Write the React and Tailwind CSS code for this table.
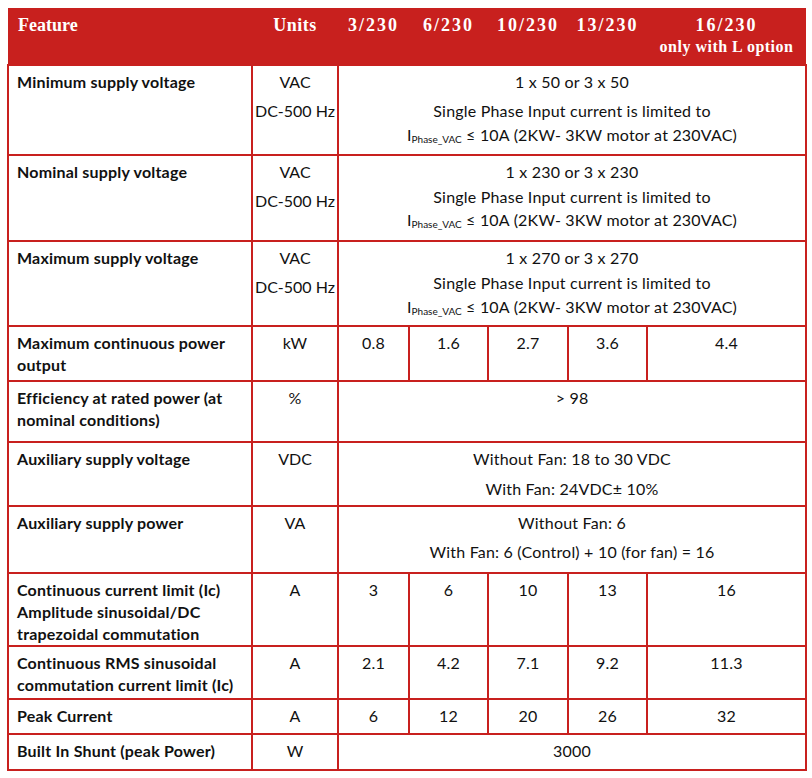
const RED = "border-[#c8201e]";

const sub = (
  <>
    I<span className="text-[10px] align-[-2px] tracking-normal">Phase_VAC</span> ≤ 10A (2KW- 3KW motor at 230VAC)
  </>
);

const rows = [
  {
    label: ["Minimum supply voltage"],
    units: ["VAC", "DC-500 Hz"],
    merged: ["1 x 50 or 3 x 50", "Single Phase Input current is limited to", sub],
    gaps: ["mt-[7px]", "mt-[2px]"],
    h: "h-[90px]",
  },
  {
    label: ["Nominal supply voltage"],
    units: ["VAC", "DC-500 Hz"],
    merged: ["1 x 230 or 3 x 230", "Single Phase Input current is limited to", sub],
    gaps: ["mt-[3px]", "mt-[1px]"],
    h: "h-[86px]",
  },
  {
    label: ["Maximum supply voltage"],
    units: ["VAC", "DC-500 Hz"],
    merged: ["1 x 270 or 3 x 270", "Single Phase Input current is limited to", sub],
    gaps: ["mt-[3px]", "mt-[2px]"],
    h: "h-[85px]",
  },
  {
    label: ["Maximum continuous power", "output"],
    units: ["kW"],
    values: ["0.8", "1.6", "2.7", "3.6", "4.4"],
    h: "h-[55px]",
  },
  {
    label: ["Efficiency at rated power (at", "nominal conditions)"],
    units: ["%"],
    merged: ["> 98"],
    h: "h-[61px]",
  },
  {
    label: ["Auxiliary supply voltage"],
    units: ["VDC"],
    merged: ["Without Fan: 18 to 30 VDC", "With Fan: 24VDC± 10%"],
    gaps: ["mt-[8px]"],
    h: "h-[64px]",
  },
  {
    label: ["Auxiliary supply power"],
    units: ["VA"],
    merged: ["Without Fan: 6", "With Fan: 6 (Control) + 10 (for fan) = 16"],
    gaps: ["mt-[7px]"],
    h: "h-[67px]",
  },
  {
    label: ["Continuous current limit (Ic)", "Amplitude sinusoidal/DC", "trapezoidal commutation"],
    units: ["A"],
    values: ["3", "6", "10", "13", "16"],
    h: "h-[73px]",
  },
  {
    label: ["Continuous RMS sinusoidal", "commutation current limit (Ic)"],
    units: ["A"],
    values: ["2.1", "4.2", "7.1", "9.2", "11.3"],
    h: "h-[53px]",
  },
  {
    label: ["Peak Current"],
    units: ["A"],
    values: ["6", "12", "20", "26", "32"],
    h: "h-[35px]",
  },
  {
    label: ["Built In Shunt (peak Power)"],
    units: ["W"],
    merged: ["3000"],
    h: "h-[36px]",
  },
];

export default function App() {
  const cell = `border-2 ${RED} align-top pt-[5px] pb-0`;
  const head = "align-top text-center pt-[6px] font-bold tracking-[2px]";

  return (
    <div className="min-h-screen bg-white pt-[8px] pl-[7px] font-['Lato','Open_Sans',sans-serif] text-[16px] leading-[22px] tracking-[0.2px] text-[#111]">
      <table className="table-fixed border-collapse w-[798px]">
        <colgroup>
          <col className="w-[244px]" />
          <col className="w-[86px]" />
          <col className="w-[71px]" />
          <col className="w-[79px]" />
          <col className="w-[80px]" />
          <col className="w-[79px]" />
          <col className="w-[159px]" />
        </colgroup>

        {/* HEADER */}
        <thead>
          <tr className="h-[57px] bg-[#c8201e] text-white font-['Liberation_Serif',serif] font-bold text-[18px] leading-[22px] tracking-normal">
            <th className="align-top text-left pl-[10px] pt-[6px] font-bold">Feature</th>
            <th className="align-top text-center pt-[6px] font-bold tracking-[0.5px]">Units</th>
            <th className={head}>3/230</th>
            <th className={head}>6/230</th>
            <th className={head}>10/230</th>
            <th className={head}>13/230</th>
            <th className={head}>
              16/230
              <div className="text-[16px] leading-[22px] tracking-[0.5px] whitespace-nowrap">only with L option</div>
            </th>
          </tr>
        </thead>

        {/* BODY */}
        <tbody>
          {rows.map((row, i) => (
            <tr key={i} className={row.h}>
              <td className={`${cell} pl-[8px] font-bold`}>
                {row.label.map((l, j) => (
                  <div key={j} className="whitespace-nowrap">{l}</div>
                ))}
              </td>

              <td className={`${cell} text-center tracking-normal`}>
                {row.units.map((u, j) => (
                  <div key={j} className={j > 0 ? "mt-[7px]" : ""}>
                    {u}
                  </div>
                ))}
              </td>

              {row.merged && (
                <td colSpan={5} className={`${cell} text-center`}>
                  {row.merged.map((m, j) => (
                    <div
                      key={j}
                      className={j > 0 ? row.gaps[j - 1] : ""}
                    >
                      {m}
                    </div>
                  ))}
                </td>
              )}

              {row.values &&
                row.values.map((v, j) => (
                  <td key={j} className={`${cell} text-center`}>
                    {v}
                  </td>
                ))}
            </tr>
          ))}
        </tbody>
      </table>
    </div>
  );
}
